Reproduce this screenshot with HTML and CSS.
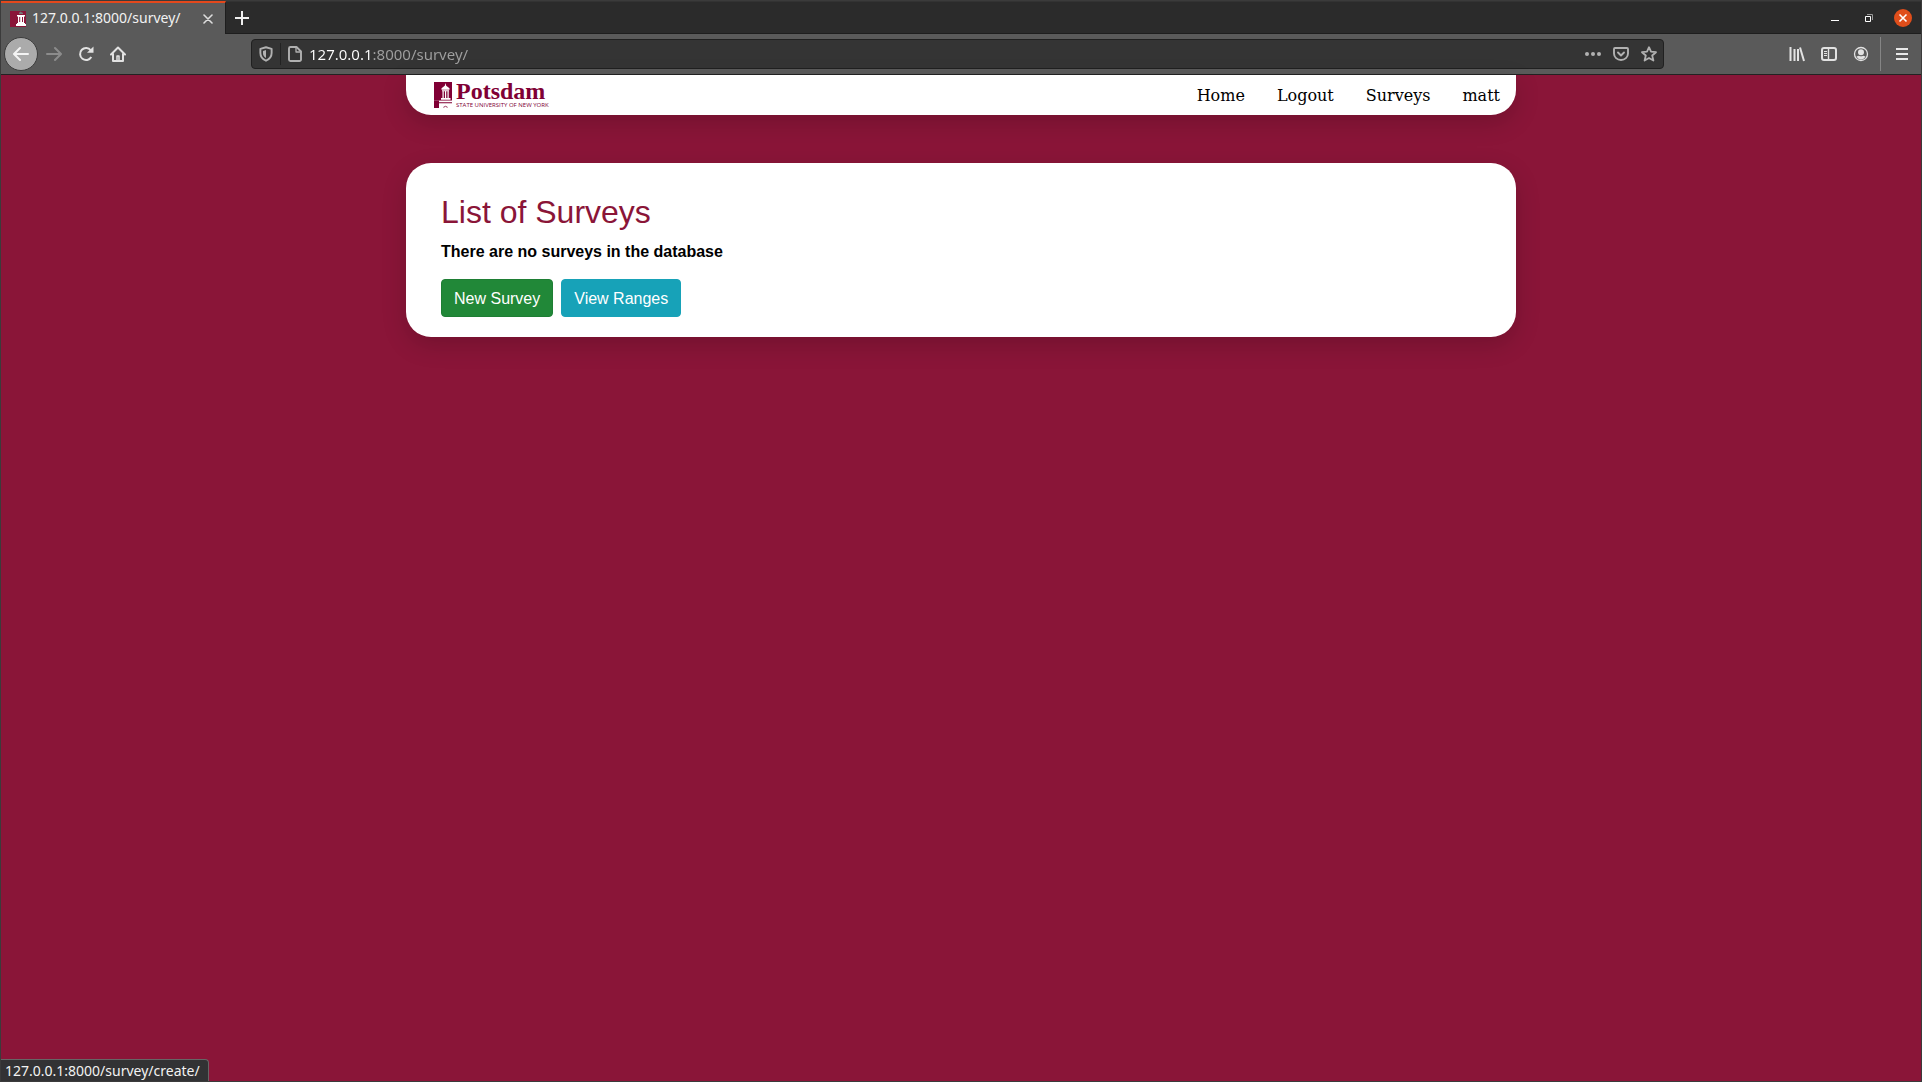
FILE: index.html
```html
<!DOCTYPE html>
<html lang="en">
<head>
<meta charset="utf-8">
<title>127.0.0.1:8000/survey/</title>
<link rel="stylesheet" href="styles.css">
</head>
<body>
<div class="window">
  <header class="chrome">
    <div class="tabstrip">
      <div class="tab">
        <svg class="favicon" viewBox="0 0 16 16" aria-hidden="true"><path fill="#8a1538" d="M0 0h16v16H0z"/><path fill="#777" d="M9 2l1.500-1.500L13 2v1H9z"/><path fill="#fff" d="M7 4h8v1.500h-1V12h1v1h1v2H6v-2h1v-1h1V5.500H7z"/><path fill="#8a1538" d="M9.200 6h1v5h-1zM12 6h1v5h-1z"/></svg>
        <span class="tab-title">127.0.0.1:8000/survey/</span>
        <button class="tab-close" aria-label="Close tab"><svg width="10" height="10" viewBox="0 0 10 10"><path d="M1 1l8 8M9 1L1 9" stroke="#ddd" stroke-width="1.600" stroke-linecap="round"/></svg></button>
      </div>
      <button class="new-tab" aria-label="New tab"><svg width="14" height="14" viewBox="0 0 14 14"><path d="M7 0v14M0 7h14" stroke="#eee" stroke-width="2"/></svg></button>
      <div class="window-controls">
        <button aria-label="Minimize"><svg width="18" height="18" viewBox="0 0 18 18"><path d="M5 11.500h8" stroke="#fff"/></svg></button>
        <button aria-label="Restore"><svg width="18" height="18" viewBox="0 0 18 18" fill="none"><path d="M7 5.500h5.500V11" stroke="#999"/><path d="M5.500 7.500h5v5h-5z" stroke="#fff"/></svg></button>
        <button class="window-close" aria-label="Close"><svg width="18" height="18" viewBox="0 0 18 18"><path d="M5.500 5.500l7 7M12.500 5.500l-7 7" stroke="#fff" stroke-width="1.600"/></svg></button>
      </div>
    </div>
    <div class="toolbar">
      <div class="nav-buttons">
        <button class="back" aria-label="Back"><svg width="16" height="16" viewBox="0 0 16 16" fill="none" stroke="#f4f4f4" stroke-width="2" stroke-linecap="round" stroke-linejoin="round"><path d="M15 8H1.500M7 2L1 8l6 6"/></svg></button>
        <button aria-label="Forward"><svg width="16" height="16" viewBox="0 0 16 16" fill="none" stroke="#8c8c8c" stroke-width="2" stroke-linecap="round" stroke-linejoin="round"><path d="M1 8h13.500M9 2l6 6-6 6"/></svg></button>
        <button aria-label="Reload"><svg width="16" height="16" viewBox="0 0 16 16" fill="none" stroke="#e2e2e2" stroke-width="2"><path d="M13.300 11A6 6 0 1 1 12.800 4.300"/><path d="M15.500 0.500v6.300H9z" fill="#e2e2e2" stroke="none"/></svg></button>
        <button aria-label="Home"><svg width="16" height="16" viewBox="0 0 16 16" fill="none" stroke="#e2e2e2" stroke-width="2" stroke-linejoin="round" stroke-linecap="round"><path d="M1 8.500L8 1.500l7 7M3 8v7h10V8"/><path d="M7 14v-4h2v4" stroke-width="1.500"/></svg></button>
      </div>
      <form class="urlbar">
        <button type="button" class="shield" aria-label="Tracking protection"><svg width="16" height="18" viewBox="0 0 14 16"><path d="M7 2l5 1.500V7c0 3.500-2 5.500-5 7-3-1.500-5-3.500-5-7V3.500z" fill="none" stroke="#b1b1b1" stroke-width="1.700" stroke-linejoin="round"/><path d="M7 4.500v7C5 10.300 4.300 9 4.300 7V5.300z" fill="#b1b1b1"/></svg></button>
        <button type="button" class="page-info" aria-label="Site information"><svg width="16" height="16" viewBox="0 0 16 16" fill="none" stroke="#b1b1b1" stroke-width="1.900" stroke-linejoin="round"><path d="M3.500 1h6L14 5.500V13.500A1.500 1.500 0 0 1 12.500 15h-9A1.500 1.500 0 0 1 2 13.500v-11A1.500 1.500 0 0 1 3.500 1z"/><path d="M9 1.500V6h4.500" stroke-width="1.300"/></svg></button>
        <input class="url" type="text" aria-label="Address" value="127.0.0.1:8000/survey/">
        <div class="url-actions">
          <button type="button" aria-label="Page actions"><svg width="16" height="16" viewBox="0 0 16 16" fill="#b1b1b1"><circle cx="2" cy="8" r="2"/><circle cx="8" cy="8" r="2"/><circle cx="14" cy="8" r="2"/></svg></button>
          <button type="button" aria-label="Save to Pocket"><svg width="16" height="16" viewBox="0 0 16 16" fill="none" stroke="#b1b1b1" stroke-width="1.900" stroke-linecap="round" stroke-linejoin="round"><path d="M2 2h12a1 1 0 0 1 1 1v4.500a7 6.500 0 0 1-14 0V3a1 1 0 0 1 1-1z"/><path d="M5 6.500l3 3 3-3"/></svg></button>
          <button type="button" aria-label="Bookmark this page"><svg width="16" height="16" viewBox="0 0 16 16" fill="none" stroke="#b1b1b1" stroke-width="1.800" stroke-linejoin="round"><path d="M8 1.200l2 4.500 5 .5-3.800 3.300 1.200 5L8 12l-4.400 2.500 1.200-5L1 6.200l5-.5z"/></svg></button>
        </div>
      </form>
      <div class="toolbar-end">
        <button aria-label="Library"><svg width="16" height="16" viewBox="0 0 16 16" stroke="#e2e2e2" stroke-width="2"><path d="M1.500 1v14M5.500 3v12M9 3v12" /><path d="M11 1.500L15 15"/></svg></button>
        <button aria-label="Sidebars"><svg width="16" height="16" viewBox="0 0 16 16" fill="none" stroke="#e2e2e2"><rect x="1" y="2" width="14" height="12" rx="2" stroke-width="2"/><path d="M7.500 2v12" stroke-width="1.400"/><path d="M3 5.500h3M3 7.500h3M3 9.500h3"/></svg></button>
        <button aria-label="Account"><svg width="16" height="16" viewBox="0 0 16 16"><circle cx="8" cy="8" r="6.500" fill="none" stroke="#e2e2e2" stroke-width="1.300"/><circle cx="8" cy="6.300" r="3" fill="#e2e2e2"/><path d="M3.500 10.500q1.500-.8 2.500-.8 2 1.300 4 0 1 0 2.500.8Q11 13.500 8 13.500t-4.500-3z" fill="#e2e2e2"/></svg></button>
      </div>
      <button class="menu" aria-label="Open menu"><svg width="16" height="16" viewBox="0 0 16 16"><path d="M2 3h12M2 8h12M2 13h12" stroke="#e8e8e8" stroke-width="2"/></svg></button>
    </div>
  </header>

  <div class="page">
    <nav class="navbar">
      <a class="brand" href="#">
        <svg width="18" height="26" viewBox="0 0 18 25" preserveAspectRatio="none" aria-hidden="true"><path fill="#800035" d="M0 0h18v18H0z"/><path fill="#800035" d="M0 18h5v7H0z"/><path fill="#fff" d="M11.500 1l.7 2.500 3.300 2.500v1.500h-8V6l3.300-2.500zM8 8h7v1H8zM8.500 9h1.200v6.500H8.500zM11 9h1.200v6.500H11zM13.500 9h1.200v6.500h-1.200zM7 15.500h9.500V17H7zM5 18h13v1H5z"/><path fill="#800035" d="M5 19.500h13v1H5zM9 24.500q2.500-3.500 5 0h-1.500v-1h-2v1H9z"/></svg>
        <span class="brand-text"><span class="brand-name">Potsdam</span><span class="brand-sub">STATE UNIVERSITY OF NEW YORK</span></span>
      </a>
      <div class="links">
        <a href="#">Home</a><a href="#">Logout</a><a href="#">Surveys</a><a href="#">matt</a>
      </div>
    </nav>
    <main class="card">
      <h1>List of Surveys</h1>
      <p>There are no surveys in the database</p>
      <div class="actions">
        <a class="btn btn-success" href="#">New Survey</a>
        <a class="btn btn-info" href="#">View Ranges</a>
      </div>
    </main>
  </div>
  <div class="status">127.0.0.1:8000/survey/create/</div>
</div>
</body>
</html>
```

FILE: styles.css
```css
* { box-sizing: border-box; }

body {
  margin: 0;
  background: #8a1538;
  font-family: "Liberation Sans", Arial, sans-serif;
  font-size: 16px;
  line-height: 24px;
}

button {
  display: flex;
  align-items: center;
  justify-content: center;
  margin: 0;
  padding: 0;
  border: 0;
  background: none;
}

svg { display: block; flex: none; }

a { text-decoration: none; }

.window {
  position: relative;
  display: flex;
  flex-direction: column;
  min-height: 100vh;
  border: 1px solid #3b3b3b;
}

/* Browser chrome */
.chrome { font-family: "Noto Sans", sans-serif; }

.tabstrip {
  display: flex;
  height: 33px;
  background: #2b2b2b;
  border-top: 1px solid #333;
  border-bottom: 1px solid #1e1e1e;
}

.tab {
  display: flex;
  align-items: center;
  width: 225px;
  height: 33px;
  margin-top: -1px;
  padding: 0 12px 0 9px;
  background: #5a5a5a;
  border-top: 2px solid #e4481c;
  border-right: 1px solid #1e1e1e;
}

.favicon { width: 16px; height: 16px; }

.tab-title {
  flex: 1;
  margin-left: 6px;
  padding-bottom: 2px;
  color: #f2f2f2;
  font-size: 14px;
  line-height: 20px;
  white-space: nowrap;
}

.new-tab { width: 32px; }

.window-controls {
  display: flex;
  align-items: center;
  gap: 16px;
  margin-left: auto;
  padding-right: 9px;
}

.window-close { border-radius: 50%; background: #e04e1b; }

.toolbar {
  display: flex;
  align-items: center;
  height: 41px;
  padding: 0 5px 0 3px;
  background: #5a5a5a;
  border-bottom: 1px solid #222;
}

.nav-buttons {
  display: flex;
  align-items: center;
  width: 247px;
}

.nav-buttons button { width: 32px; height: 32px; }

.nav-buttons .back {
  width: 34px;
  height: 34px;
  border: 1px solid #3c3c3c;
  border-radius: 50%;
  background: #ababab;
}

.urlbar {
  display: flex;
  flex: 1;
  align-items: center;
  height: 30px;
  border: 1px solid #202020;
  border-radius: 4px;
  background: #343434;
}

.shield {
  width: 29px;
  height: 22px;
  border-right: 1px solid #222;
}

.page-info { width: 28px; }

.url {
  flex: 1;
  min-width: 0;
  padding: 0;
  border: 0;
  outline: 0;
  color: transparent;
  background: linear-gradient(to right, #fff 64px, #a0a0a0 64px);
  background-clip: text;
  -webkit-background-clip: text;
  font: 15px/20px "Noto Sans", sans-serif;
}

.url-actions {
  display: flex;
  gap: 12px;
  padding-right: 6px;
}

.toolbar-end {
  display: flex;
  gap: 16px;
  margin-left: 125px;
  padding-right: 11px;
}

.menu {
  width: 36px;
  height: 34px;
  padding-left: 6px;
  border-left: 1px solid #858585;
}

/* Web page */
.page {
  flex: 1;
  width: 100%;
  max-width: 1140px;
  margin: 0 auto;
  padding: 0 15px;
}

.navbar {
  display: flex;
  justify-content: space-between;
  height: 40px;
  padding: 0 16px 0 28px;
  border-radius: 0 0 25px 25px;
  background: #fff;
  box-shadow: 0 8px 24px rgba(0, 0, 0, 0.17);
}

.brand {
  display: flex;
  align-items: center;
  gap: 4px;
  color: #800035;
}

.brand-text { display: flex; flex-direction: column; }

.brand-name {
  font: bold 24px/20px "Liberation Serif", serif;
}

.brand-sub {
  font: 6px/8px "Liberation Sans Narrow", "Open Sans", sans-serif;
  white-space: nowrap;
}

.links {
  display: flex;
  gap: 32px;
  font: 16px/42px "DejaVu Serif", serif;
}

.links a { color: #000; }

.card {
  margin-top: 48px;
  padding: 30px 35px 20px;
  border-radius: 25px;
  background: #fff;
  box-shadow: 0 8px 24px rgba(0, 0, 0, 0.17);
}

h1 {
  margin: 0 0 8px;
  color: #8a1538;
  font-size: 32px;
  font-weight: 400;
  line-height: 38px;
}

p {
  margin: 0;
  padding: 1px 0 15px;
  color: #000;
  font-weight: 700;
}

.actions { display: flex; gap: 8px; }

.btn {
  padding: 7px 12px 5px;
  border: 1px solid;
  border-radius: 4px;
  color: #fff;
}

.btn-success { background: #218838; border-color: #1e7e34; }
.btn-info { background: #17a2b8; border-color: #17a2b8; }

.status {
  position: absolute;
  left: 0;
  bottom: 0;
  padding: 0 8px 0 4px;
  border: 1px solid #666;
  border-width: 1px 1px 0 0;
  border-radius: 0 4px 0 0;
  background: #323234;
  color: #f2f2f2;
  font: 14px/21px "Noto Sans", sans-serif;
}
```
